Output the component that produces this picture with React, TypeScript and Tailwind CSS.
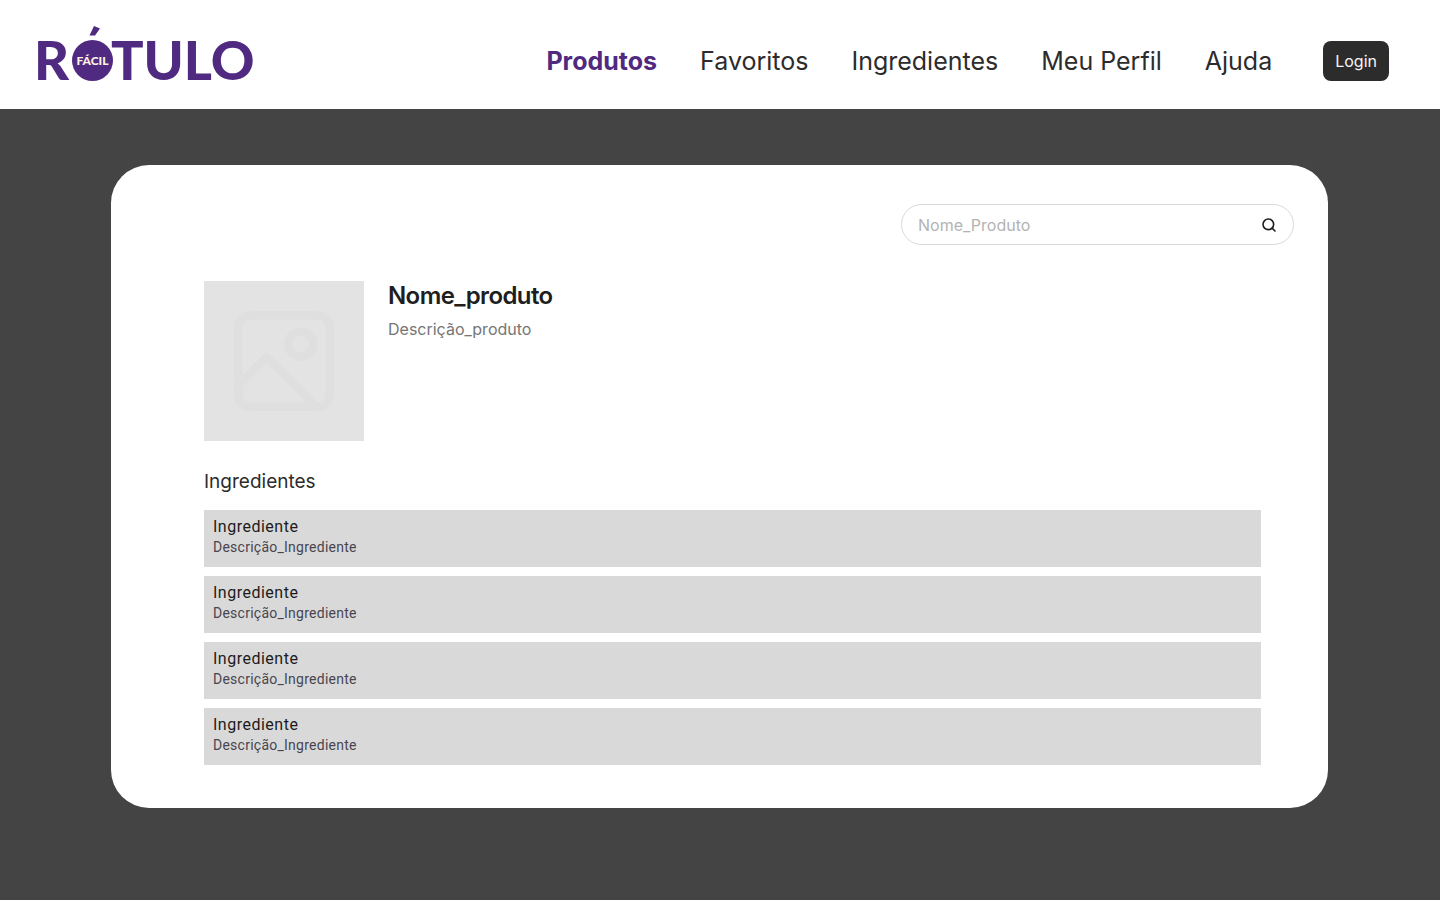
import { Search } from "lucide-react";

const navLinks = [
  { label: "Produtos", active: true },
  { label: "Favoritos", active: false },
  { label: "Ingredientes", active: false },
  { label: "Meu Perfil", active: false },
  { label: "Ajuda", active: false },
];

const ingredients = [1, 2, 3, 4].map((id) => ({
  id,
  name: "Ingrediente",
  description: "Descrição_Ingrediente",
}));

function Logo() {
  return (
    <svg
      viewBox="-8 -8 240 74"
      className="h-[74px] w-[240px] shrink-0 fill-[#4f2a80] font-['Lato',sans-serif] font-black"
      role="img"
      aria-label="Rótulo Fácil"
    >
      <text x="-4" y="54" fontSize="54">R</text>
      <circle cx="54.5" cy="34.5" r="20.5" />
      <path d="M56 0 62 2.500 57 9.500H51.500Z" />
      <text x="54.500" y="39" fontSize="12" textAnchor="middle" className="fill-[#fdf3e0]">
        FÁCIL
      </text>
      <text x="73" y="54" fontSize="54">TULO</text>
    </svg>
  );
}

function Header() {
  return (
    <header className="flex h-[109px] items-center justify-between bg-white pr-[51px] pl-[30px]">
      <a href="#inicio">
        <Logo />
      </a>
      <div className="flex items-center gap-[51px] pt-3">
        <nav className="flex items-center gap-[43px] text-[25px] leading-10 text-[#2c2c2c]">
          {navLinks.map((link) => (
            <a
              key={link.label}
              href="#"
              aria-current={link.active ? "page" : undefined}
              className={link.active ? "font-bold text-[#4f2a80]" : "font-normal"}
            >
              {link.label}
            </a>
          ))}
        </nav>
        <button type="button" className="h-10 rounded-lg bg-[#2c2c2c] px-3 text-base text-[#f5f5f5]">
          Login
        </button>
      </div>
    </header>
  );
}

function SearchBox() {
  return (
    <form className="ml-auto flex h-[41px] w-[393px] items-center rounded-full border border-[#d9d9d9] px-4">
      <input
        type="search"
        aria-label="Buscar produto"
        placeholder="Nome_Produto"
        className="min-w-0 flex-1 bg-transparent text-base text-[#1e1e1e] outline-none placeholder:text-[#b3b3b3]"
      />
      <button type="button" aria-label="Buscar">
        <Search className="size-4 text-[#1e1e1e]" strokeWidth={2.4} />
      </button>
    </form>
  );
}

function ImagePlaceholder() {
  return (
    <div className="flex size-40 shrink-0 items-center justify-center bg-[#e3e3e3]">
      <svg viewBox="0 0 100 100" className="size-[100px] fill-none stroke-[#dfdfdf]" strokeWidth="8.4" strokeLinejoin="round">
        <rect x="4.200" y="4.200" width="91.600" height="91.600" rx="12" />
        <circle cx="66.700" cy="33.300" r="12.500" />
        <path d="M4.200 74 32.500 46 82 95.500" />
      </svg>
    </div>
  );
}

export default function App() {
  return (
    <div className="min-h-screen bg-[#444444] font-['Inter',sans-serif]">
      <Header />
      <main className="mt-14 mr-28 ml-[111px] rounded-[38px] bg-white pt-[39px] pb-[43px]">
        <div className="pr-[34px]">
          <SearchBox />
        </div>
        <div className="pt-9 pr-[67px] pl-[93px]">
          <section className="flex gap-6">
            <ImagePlaceholder />
            <div>
              <h1 className="text-2xl leading-[30px] font-semibold tracking-tight text-[#1e1e1e]">Nome_produto</h1>
              <p className="mt-1.5 text-base text-[#757575]">Descrição_produto</p>
            </div>
          </section>
          <section>
            <h2 className="mt-[27px] text-[19px] leading-7 text-[#2c2c2c]">Ingredientes</h2>
            <ul className="mt-3.5 flex flex-col gap-[9px]">
              {ingredients.map((item) => (
                <li key={item.id} className="h-[57px] bg-[#d9d9d9] px-[9px] pt-[5px] font-['Roboto',sans-serif]">
                  <p className="text-base leading-6 tracking-[0.5px] text-[#1d1b20]">{item.name}</p>
                  <p className="text-sm leading-4 tracking-[0.25px] text-[#49454f]">{item.description}</p>
                </li>
              ))}
            </ul>
          </section>
        </div>
      </main>
    </div>
  );
}
